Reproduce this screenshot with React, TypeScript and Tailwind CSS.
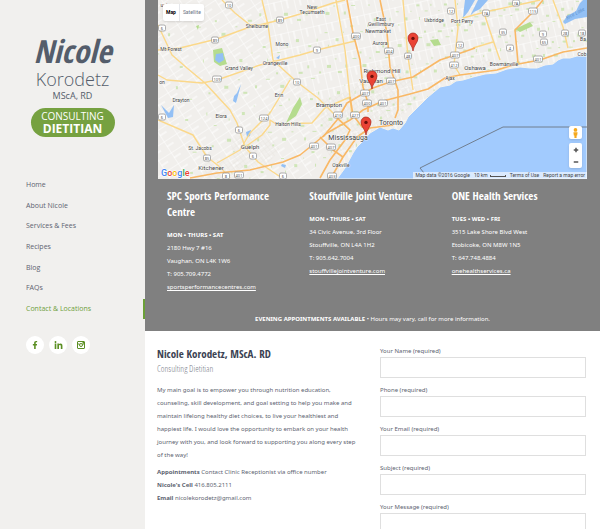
import { FaFacebookF, FaLinkedinIn } from 'react-icons/fa';

const navItems = [
  { label: 'Home', href: '#home' },
  { label: 'About Nicole', href: '#about' },
  { label: 'Services & Fees', href: '#services' },
  { label: 'Recipes', href: '#recipes' },
  { label: 'Blog', href: '#blog' },
  { label: 'FAQs', href: '#faqs' },
  { label: 'Contact & Locations', href: '#contact', active: true },
];

const locations = [
  {
    name: 'SPC Sports Performance Centre',
    days: 'MON • THURS • SAT',
    lines: ['2180 Hwy 7 #16', 'Vaughan, ON L4K 1W6', 'T: 905.709.4772'],
    site: 'sportsperformancecentres.com',
  },
  {
    name: 'Stouffville Joint Venture',
    days: 'MON • THURS • SAT',
    lines: ['34 Civic Avenue, 3rd Floor', 'Stouffville, ON L4A 1H2', 'T: 905.642.7004'],
    site: 'stouffvillejointventure.com',
  },
  {
    name: 'ONE Health Services',
    days: 'TUES • WED • FRI',
    lines: ['3515 Lake Shore Blvd West', 'Etobicoke, ON M8W 1N5', 'T: 647.748.4884'],
    site: 'onehealthservices.ca',
  },
];

const fields = [
  { id: 'name', label: 'Your Name (required)', type: 'text' },
  { id: 'phone', label: 'Phone (required)', type: 'tel' },
  { id: 'email', label: 'Your Email (required)', type: 'email' },
  { id: 'subject', label: 'Subject (required)', type: 'text' },
];

const yellowRoads = [
  '158,50 180,48 217,39 247,28 280,20 300,14 333,3 345,0',
  '222,0 235,13 250,25 267,25',
  '262,0 268,25 273,60 287,73 297,82 318,98 330,110 350,130',
  '158,25 165,40 172,55 187,68 205,83 230,110 237,123 245,147 258,162 282,178',
  '158,75 167,80 202,83 217,80 260,65 300,55 317,50 355,41',
  '158,120 193,135 207,157 220,167 230,178',
  '217,163 240,150 250,133 270,113 290,80',
  '245,147 262,135 270,125 270,120 276,124 312,123 325,108 350,97',
  '403,0 408,57 413,90',
  '336,0 345,50 350,97 352,118',
  '455,0 458,28 455,55 454,65 460,75',
  '483,10 493,40 500,60',
  '463,18 485,12 527,3 540,0',
  '553,0 563,27 568,48',
  '473,48 493,42',
];

const orangeRoads = [
  '190,178 217,173 250,170 283,162 300,155 310,147 327,133 350,120 363,110 383,101 410,94 428,89 445,78 460,75 497,70 513,65 540,60 563,52 587,48',
  '320,178 330,160 345,140 350,130 337,118',
  '323,137 337,120 347,103 373,88 390,82 413,77 440,60 455,55 475,48',
  '347,0 353,33 360,60 363,87 368,103 368,112',
  '380,0 387,33 390,67 398,90 398,110 395,118',
  '331,178 343,157 357,137 370,128 393,125',
  '343,157 333,150 320,137',
  '350,97 353,115 362,127 369,129',
  '543,0 533,12 515,30 518,63',
];

const labels: [number, number, string, number?][] = [
  [164, 7, 'unt'],
  [257, 28, 'Shelburne'],
  [171, 51, 'Mt Forest'],
  [282, 46, 'Mono'],
  [239, 70, 'Grand Valley'],
  [275, 65, 'Orangeville'],
  [162, 84, 'on'],
  [181, 102, 'Drayton'],
  [221, 118, 'Elora'],
  [279, 97, 'Erin'],
  [288, 126, 'Halton Hills'],
  [200, 150, 'St. Jacobs'],
  [250, 149, 'Guelph', 6],
  [211, 170, 'Kitchener', 6],
  [312, 9, 'New'],
  [312, 14, 'Tecumseth'],
  [381, 21, 'East'],
  [381, 26, 'Gwillimbury'],
  [378, 33, 'Newmarket'],
  [380, 45, 'Aurora'],
  [382, 73, 'Richmond Hill', 6],
  [371, 83, 'Vaughan', 6],
  [329, 107, 'Brampton', 6],
  [391, 125, 'Toronto', 7],
  [348, 140, 'Mississauga', 7],
  [341, 167, 'Oakville'],
  [434, 22, 'Uxbridge'],
  [462, 23, 'Port Perry'],
  [475, 70, 'Oshawa', 6],
  [504, 66, 'Bowmanville'],
  [450, 80, 'Ajax'],
  [583, 41, 'Ba'],
  [582, 56, 'Cob'],
];

const shields: [number, number, string][] = [
  [229, 5, '10'], [280, 20, '89'], [162, 28, '6'], [215, 40, '89'],
  [217, 79, '109'], [297, 82, '10'], [264, 118, '124'], [239, 130, '6'],
  [253, 156, '6'], [207, 158, '85'], [162, 117, '6'], [226, 176, '8'],
  [239, 175, '401'], [283, 176, '6'], [356, 36, '400'], [317, 50, '9'],
  [389, 51, '404'], [408, 56, '48'], [391, 81, '407'], [365, 93, '407'],
  [367, 103, '400'], [383, 103, '401'], [338, 115, '410'], [355, 115, '427'],
  [314, 146, '401'], [331, 147, '407'], [332, 176, '403'],
  [451, 11, '12'], [486, 13, '7A'], [516, 3, '7A'], [533, 11, '115'],
  [503, 32, '35'], [543, 34, '9'], [544, 42, '65'], [565, 33, '28'],
  [582, 33, '18'], [460, 45, '12'], [455, 55, '407'], [454, 65, '412'],
  [510, 48, '4'], [538, 59, '401'],
];

const pins = [
  [413, 51],
  [372, 89],
  [366, 135],
];

// small parks scattered over the land, thicker in the east
const parks = Array.from({ length: 420 }, (_, i) => {
  const a = (i * 0.618034) % 1;
  const b = (i * 0.754878 + 0.3) % 1;
  return {
    x: 158 + 429 * Math.pow(a, 0.6),
    y: b * 178,
    w: 1 + (i % 4),
    h: 1 + (i % 3),
  };
});

const shore =
  'M337 179 L345 168 353 153 357 147 362 142 370 133 380 127 388 130 393 128 399 130 405 123 408 117 417 108 424 101 428 97 434 92 440 87 450 85 456 81 463 80 473 77 485 74 496 73 507 69 520 67 530 68 537 68 545 65 553 64 558 60 563 58 570 58 577 56 587 56 V179Z';

function AreaMap() {
  return (
    <svg viewBox="158 0 429 179" className="block h-auto w-full" role="img" aria-label="Clinic locations around Toronto">
      <defs>
        <pattern id="grid" width="15" height="13" patternUnits="userSpaceOnUse" patternTransform="rotate(-33)">
          <path d="M0 0H15M0 0V13M0 6H8" stroke="#fff" strokeWidth="1" fill="none" />
        </pattern>
        <pattern id="gridEast" width="13" height="16" patternUnits="userSpaceOnUse" patternTransform="rotate(-13)">
          <path d="M0 0H13M0 0V16M6 0V9" stroke="#fff" strokeWidth="1" fill="none" />
        </pattern>
        <pattern id="streets" width="4" height="4" patternUnits="userSpaceOnUse" patternTransform="rotate(-38)">
          <path d="M0 0H4M0 0V4" stroke="#e2dfda" strokeWidth="0.6" fill="none" />
        </pattern>
      </defs>
      <rect x="158" width="429" height="179" fill="#f1efec" />
      <path d="M158 0H262L274 60 300 90 335 125 310 179H158Z" fill="url(#grid)" />
      <path d="M262 0H587V80L340 179 335 125 300 90 274 60Z" fill="url(#gridEast)" />
      <path d="M230 140 262 125 280 150 262 170 235 168Z M322 100 350 90 372 66 400 64 420 95 395 125 360 140 335 165 320 140Z M440 70 490 58 490 72 440 84Z M205 158 235 162 238 178 205 178Z" fill="url(#streets)" />
      {parks.map((p, i) => (
        <rect key={i} x={p.x} y={p.y} width={p.w} height={p.h} fill="#c3e2a6" opacity="0.75" />
      ))}
      <path d="M213 50 222 48 225 58 227 64 220 66 214 62Z M515 29 530 22 533 26 520 32Z M430 40 438 39 441 45 434 46Z M196 26 199 25 198 30Z M293 108 300 97 302 104 296 116 286 123Z" fill="#b5dc8e" />
      <g fill="#93c0f5">
        <path d="M216 54 223 53 224 60 219 63 215 60Z" />
        <path d="M241 84 239 92 236 103 233 101 234 96 237 93Z" />
        <path d="M161 105 169 113 174 105 173 117 168 118Z" />
        <path d="M465 0H475L468 12 463 18 464 8Z M478 0H488L480 9 474 12 470 16Z" />
        <path d="M587 0V17L575 19 565 24 563 22 567 16 576 11 580 3 583 0Z" />
        <path d="M246 132 251 130 250 136 247 137Z M282 164 286 165 285 168 281 166Z M276 58 280 55 279 59Z" />
      </g>
      <text x="576" y="15" fontSize="5" fill="#5f93cf" fontStyle="italic" textAnchor="middle" transform="rotate(-28 576 15)">Rice Lake</text>
      <g fill="none" stroke="#fbd88a" strokeWidth="1.4" strokeLinejoin="round">
        {yellowRoads.map((points) => (
          <polyline key={points} points={points} />
        ))}
      </g>
      <path d={shore} fill="#a2cbfe" stroke="#f6f4ee" strokeWidth="1" />
      <g fill="none" stroke="#f9b866" strokeWidth="1.6" strokeLinejoin="round">
        {orangeRoads.map((points) => (
          <polyline key={points} points={points} />
        ))}
      </g>
      <path d="M424 173 420 168 440 158 503 127H587" fill="none" stroke="#6b7683" strokeWidth="0.9" />
      {shields.map(([x, y, n], i) => (
        <g key={i}>
          <rect x={x - (n.length > 2 ? 4.5 : 3.5)} y={y - 3} width={n.length > 2 ? 9 : 7} height="6" rx="1.5" fill="#fff" stroke="#8d8d8d" strokeWidth="0.7" />
          <text x={x} y={y + 1.5} fontSize="4" textAnchor="middle" fill="#555">{n}</text>
        </g>
      ))}
      <g textAnchor="middle" fill="#404040" stroke="#fff" strokeWidth="0.6" paintOrder="stroke" className="font-['Roboto',sans-serif]">
        {labels.map(([x, y, name, size = 5]) => (
          <text key={name} x={x} y={y} fontSize={size}>{name}</text>
        ))}
      </g>
      {pins.map(([x, y]) => (
        <g key={x} transform={`translate(${x} ${y})`}>
          <path d="M0 0C-.6-6-5-8-5-13A5 5 0 0 1 5-13C5-8 .6-6 0 0Z" fill="#ea4335" stroke="#a8261b" strokeWidth="0.7" />
          <circle cy="-12.6" r="1.7" fill="#6b0f0a" />
        </g>
      ))}
      <text x="161" y="176" fontSize="9" fontWeight="500" stroke="#fff" strokeWidth="1" paintOrder="stroke" className="font-['Roboto',sans-serif]">
        <tspan fill="#4285f4">G</tspan>
        <tspan fill="#ea4335">o</tspan>
        <tspan fill="#fbbc05">o</tspan>
        <tspan fill="#4285f4">g</tspan>
        <tspan fill="#34a853">l</tspan>
        <tspan fill="#ea4335">e</tspan>
      </text>
    </svg>
  );
}

function Sidebar() {
  return (
    <aside className="flex w-[145px] shrink-0 flex-col bg-[#f1f0ee]">
      <a href="#home" className="mt-8 flex flex-col items-center text-[#545d6b]">
        <span className="font-['Open_Sans_Condensed','Open_Sans',sans-serif] text-[32px] leading-[38px] font-bold italic">Nicole</span>
        <span className="text-[18px] leading-[18px] font-light">Korodetz</span>
        <span className="text-[9px] leading-[16px]">MScA, RD</span>
        <span className="mt-1 flex w-[84px] flex-col items-center rounded-full bg-[#76a140] py-[2px] text-white">
          <span className="text-[10px] leading-[12px]">CONSULTING</span>
          <span className="text-[12px] leading-[13px] font-bold">DIETITIAN</span>
        </span>
      </a>

      <nav className="mt-[38px] flex h-[144px] flex-col justify-between">
        {navItems.map((item) => (
          <a
            key={item.label}
            href={item.href}
            className={`block border-r-2 pl-[26px] text-[7px] leading-[20px] ${
              item.active ? 'border-[#6ba038] text-[#6f9f3c]' : 'border-transparent text-[#5d6370]'
            }`}
          >
            {item.label}
          </a>
        ))}
      </nav>

      <div className="mt-[17px] flex gap-[5px] pl-[26px] text-[#5b8f23]">
        <a href="#facebook" aria-label="Facebook" className="flex size-[18px] items-center justify-center rounded-full bg-white">
          <FaFacebookF size={8} />
        </a>
        <a href="#linkedin" aria-label="LinkedIn" className="flex size-[18px] items-center justify-center rounded-full bg-white">
          <FaLinkedinIn size={9} />
        </a>
        <a href="#instagram" aria-label="Instagram" className="flex size-[18px] items-center justify-center rounded-full bg-white">
          <svg viewBox="0 0 16 16" width="8" height="8" fill="none" stroke="currentColor" strokeWidth="2">
            <rect x="1" y="1" width="14" height="14" rx="1" />
            <path d="M1 6H5M11 6H15" />
            <circle cx="8" cy="8" r="3" />
            <path d="M11 2H14V5H11Z" fill="currentColor" stroke="none" />
          </svg>
        </a>
      </div>
    </aside>
  );
}

function MapPanel() {
  return (
    <div className="relative mx-[13px]">
      <AreaMap />
      <div className="absolute top-1 left-[5px] flex rounded-xs bg-white font-['Roboto',sans-serif] text-[5px] leading-[17px] shadow-sm">
        <button className="border-r border-gray-200 px-[3px] font-bold text-black">Map</button>
        <button className="px-[3px] text-gray-500">Satellite</button>
      </div>
      <div className="absolute right-[5px] bottom-[11px] flex w-[13px] flex-col gap-1">
        <button aria-label="Street View" className="flex h-[13px] items-center justify-center rounded-xs bg-white shadow-sm">
          <svg viewBox="0 0 8 12" width="7" height="10" fill="#f5a81c">
            <circle cx="4" cy="2.3" r="2.2" />
            <path d="M1.5 5H6.5L6 9H5.3V12H2.7V9H2Z" />
          </svg>
        </button>
        <div className="flex flex-col rounded-xs bg-white shadow-sm">
          <button aria-label="Zoom in" className="flex h-[13px] items-center justify-center">
            <svg viewBox="0 0 8 8" width="6" height="6" stroke="#555" strokeWidth="2"><path d="M4 1V7M1 4H7" /></svg>
          </button>
          <button aria-label="Zoom out" className="flex h-3 items-center justify-center">
            <svg viewBox="0 0 8 8" width="6" height="6" stroke="#555" strokeWidth="2"><path d="M1 4H7" /></svg>
          </button>
        </div>
      </div>
      <div className="absolute right-0 bottom-0 flex gap-1 bg-white/60 px-[2px] font-['Roboto',sans-serif] text-[5px] leading-[7px] text-[#444]">
        <span>Map data ©2016 Google</span>
        <span className="flex items-center gap-[2px]">
          10 km
          <span className="h-[2px] w-4 border border-t-0 border-[#555]" />
        </span>
        <a href="#terms">Terms of Use</a>
        <a href="#report">Report a map error</a>
      </div>
    </div>
  );
}

function ContactForm() {
  return (
    <form className="flex flex-col gap-[7px] font-['Noto_Sans',sans-serif] text-[6px] text-[#5d6370]">
      {fields.map((field) => (
        <div key={field.id}>
          <label htmlFor={field.id} className="block leading-[11px]">{field.label}</label>
          <input id={field.id} type={field.type} required className="block h-[21px] w-full border border-[#dfdfdf] bg-white px-1" />
        </div>
      ))}
      <div>
        <label htmlFor="message" className="block leading-[11px]">Your Message (required)</label>
        <textarea id="message" required className="block h-20 w-full resize-none border border-[#dfdfdf] bg-white px-1" />
      </div>
    </form>
  );
}

export default function App() {
  return (
    <div className="flex h-screen overflow-hidden bg-white font-['Open_Sans',sans-serif]">
      <Sidebar />
      <main className="min-w-0 flex-1">
        <section className="bg-[#808080] pb-[5px] font-['Noto_Sans',sans-serif] text-[6px] leading-[13px] text-white">
          <MapPanel />
          <div className="mt-[9px] grid grid-cols-3 gap-4 px-[22px]">
            {locations.map((place) => (
              <div key={place.site}>
                <h2 className="mb-[9px] font-['Open_Sans_Condensed',sans-serif] text-[11px] leading-[16px] font-bold">{place.name}</h2>
                <p className="font-bold">{place.days}</p>
                {place.lines.map((line) => (
                  <p key={line}>{line}</p>
                ))}
                <a href={`#${place.site}`} className="underline">{place.site}</a>
              </div>
            ))}
          </div>
          <p className="mt-[19px] text-center">
            <strong>EVENING APPOINTMENTS AVAILABLE</strong> • Hours may vary, call for more information.
          </p>
        </section>

        <section className="grid grid-cols-2 gap-[17px] pt-[15px] pr-3.5 pl-3">
          <div className="font-['Noto_Sans',sans-serif] text-[6px] leading-[13px] text-[#5d6370]">
            <h2 className="font-['Open_Sans_Condensed',sans-serif] text-[11px] leading-[16px] font-bold text-[#3b4252]">Nicole Korodetz, MScA. RD</h2>
            <p className="font-['Open_Sans_Condensed_Light','Open_Sans_Condensed',sans-serif] text-[9px] leading-[14px] font-light text-[#7b808b]">Consulting Dietitian</p>
            <p className="mt-2 pr-1">
              My main goal is to empower you through nutrition education, counseling, skill development, and goal setting to help you make and maintain lifelong healthy diet choices, to live your healthiest and happiest life. I would love the opportunity to embark on your health journey with you, and look forward to supporting you along every step of the way!
            </p>
            <p className="mt-1"><strong>Appointments</strong> Contact Clinic Receptionist via office number</p>
            <p><strong>Nicole's Cell</strong> 416.805.2111</p>
            <p><strong>Email</strong> nicolekorodetz@gmail.com</p>
          </div>
          <ContactForm />
        </section>
      </main>
    </div>
  );
}
